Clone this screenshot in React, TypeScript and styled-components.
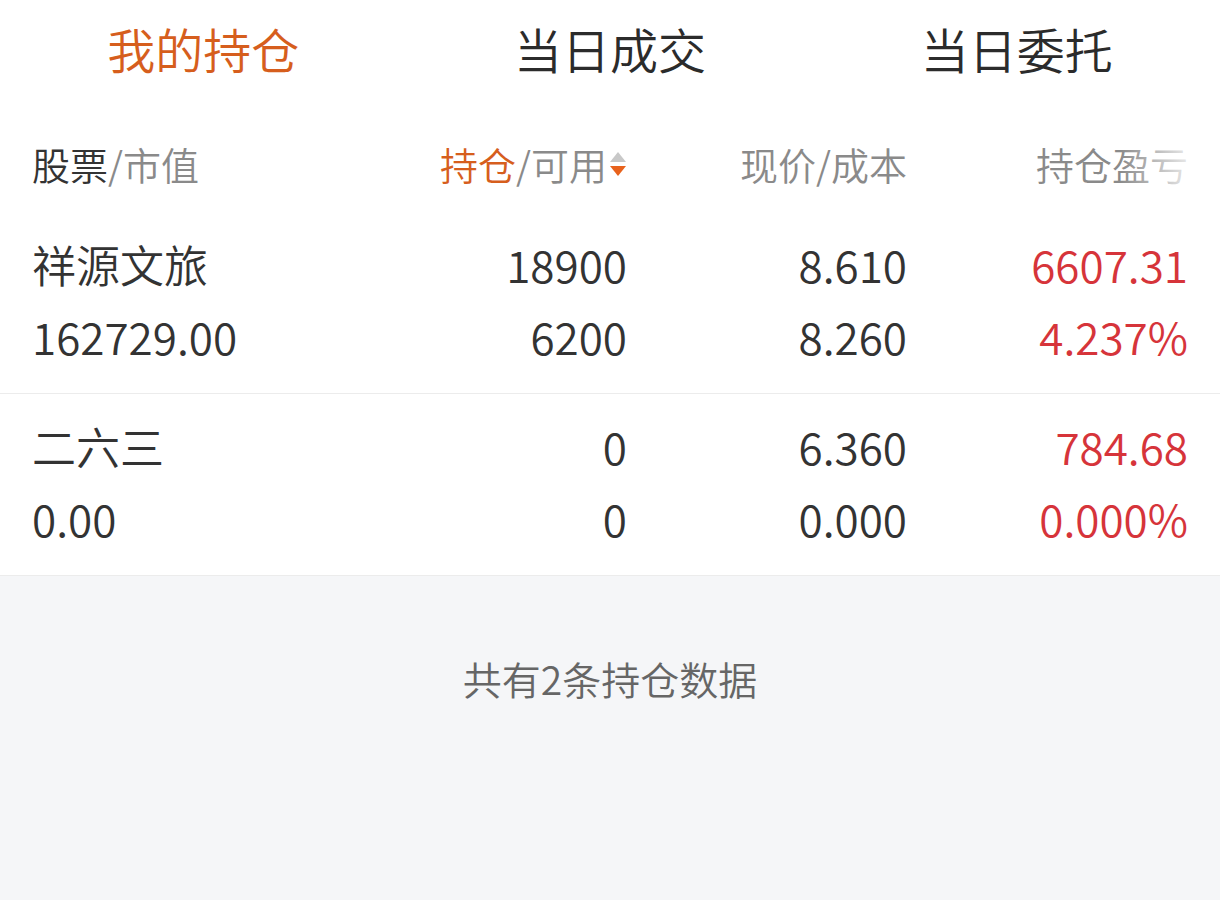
import styled, { createGlobalStyle } from "styled-components";

const GlobalStyle = createGlobalStyle`
    html, body {
        margin: 0;
        padding: 0;
        background-color: #ffffff;
    }
    body {
        font-family: "Noto Sans CJK SC", "Noto Sans", sans-serif;
    }
`;

const Page = styled.div`
    width: 1220px;
    height: 900px;
    display: flex;
    flex-direction: column;
    background-color: #f5f6f8;
    overflow: hidden;
`;

const TabBar = styled.div`
    height: 104px;
    padding-bottom: 8px;
    box-sizing: border-box;
    display: flex;
    background-color: #ffffff;
`;

const Tab = styled.div<{ active?: boolean }>`
    flex: 1;
    display: flex;
    justify-content: center;
    align-items: center;
    font-size: 48px;
    font-weight: 350;
    color: ${props => (props.active ? "#d65e1d" : "#2b2b2b")};
`;

const Columns = `
    display: grid;
    grid-template-columns: 298px 297px 280px 1fr;
    padding: 0 32px;
`;

const HeaderRow = styled.div`
    ${Columns}
    position: relative;
    height: 108px;
    padding-top: 12px;
    box-sizing: border-box;
    background-color: #ffffff;
    font-size: 38px;
    font-weight: 350;
    line-height: 50px;
    color: #8a8a8a;
    //fade on the scrollable right side
    &::after {
        content: "";
        position: absolute;
        top: 0;
        right: 0;
        width: 100px;
        height: 100%;
        background: linear-gradient(to right, rgba(255,255,255,0), #ffffff 85%);
    }
`;

const HeadCell = styled.div<{ align?: string }>`
    display: flex;
    align-items: center;
    justify-content: ${props => (props.align === "right" ? "flex-end" : "flex-start")};
    white-space: nowrap;
`;

const Strong = styled.span<{ orange?: boolean }>`
    color: ${props => (props.orange ? "#d65e1d" : "#333333")};
`;

const SortIcon = styled.svg`
    width: 18px;
    height: 34px;
    margin-left: 2px;
`;

const Row = styled.div`
    ${Columns}
    background-color: #ffffff;
    padding-top: 16px;
    padding-bottom: 21px;
    border-bottom: 1px solid #ececec;
`;

const Cell = styled.div<{ align?: string }>`
    display: flex;
    flex-direction: column;
    align-items: ${props => (props.align === "right" ? "flex-end" : "flex-start")};
`;

const Value = styled.div<{ red?: boolean }>`
    font-size: 44px;
    font-weight: 350;
    line-height: 72px;
    white-space: nowrap;
    color: ${props => (props.red ? "#d6343a" : "#333333")};
`;

const Footer = styled.div`
    flex: 1;
    display: flex;
    justify-content: center;
    padding-top: 76px;
    font-size: 39px;
    font-weight: 350;
    line-height: 52px;
    color: #666666;
`;

interface IHolding {
    name: string;
    marketValue: string;
    hold: string;
    available: string;
    price: string;
    cost: string;
    profit: string;
    profitRate: string;
}

const holdings: IHolding[] = [
    {
        name: "祥源文旅",
        marketValue: "162729.00",
        hold: "18900",
        available: "6200",
        price: "8.610",
        cost: "8.260",
        profit: "6607.31",
        profitRate: "4.237%",
    },
    {
        name: "二六三",
        marketValue: "0.00",
        hold: "0",
        available: "0",
        price: "6.360",
        cost: "0.000",
        profit: "784.68",
        profitRate: "0.000%",
    },
];

function App() {
    return (
        <>
            <GlobalStyle />
            <Page>
                <TabBar>
                    <Tab active>我的持仓</Tab>
                    <Tab>当日成交</Tab>
                    <Tab>当日委托</Tab>
                </TabBar>
                <HeaderRow>
                    <HeadCell>
                        <Strong>股票</Strong>/市值
                    </HeadCell>
                    <HeadCell align="right">
                        <Strong orange>持仓</Strong>/可用
                        <SortIcon viewBox="0 0 18 34">
                            <polygon points="9,5 17,15 1,15" fill="#c8c8c8" />
                            <polygon points="1,19 17,19 9,29" fill="#e8621c" />
                        </SortIcon>
                    </HeadCell>
                    <HeadCell align="right">现价/成本</HeadCell>
                    <HeadCell align="right">持仓盈亏</HeadCell>
                </HeaderRow>
                {holdings.map(item => (
                    <Row key={item.name}>
                        <Cell>
                            <Value>{item.name}</Value>
                            <Value>{item.marketValue}</Value>
                        </Cell>
                        <Cell align="right">
                            <Value>{item.hold}</Value>
                            <Value>{item.available}</Value>
                        </Cell>
                        <Cell align="right">
                            <Value>{item.price}</Value>
                            <Value>{item.cost}</Value>
                        </Cell>
                        <Cell align="right">
                            <Value red>{item.profit}</Value>
                            <Value red>{item.profitRate}</Value>
                        </Cell>
                    </Row>
                ))}
                <Footer>共有2条持仓数据</Footer>
            </Page>
        </>
    );
}

export default App;
